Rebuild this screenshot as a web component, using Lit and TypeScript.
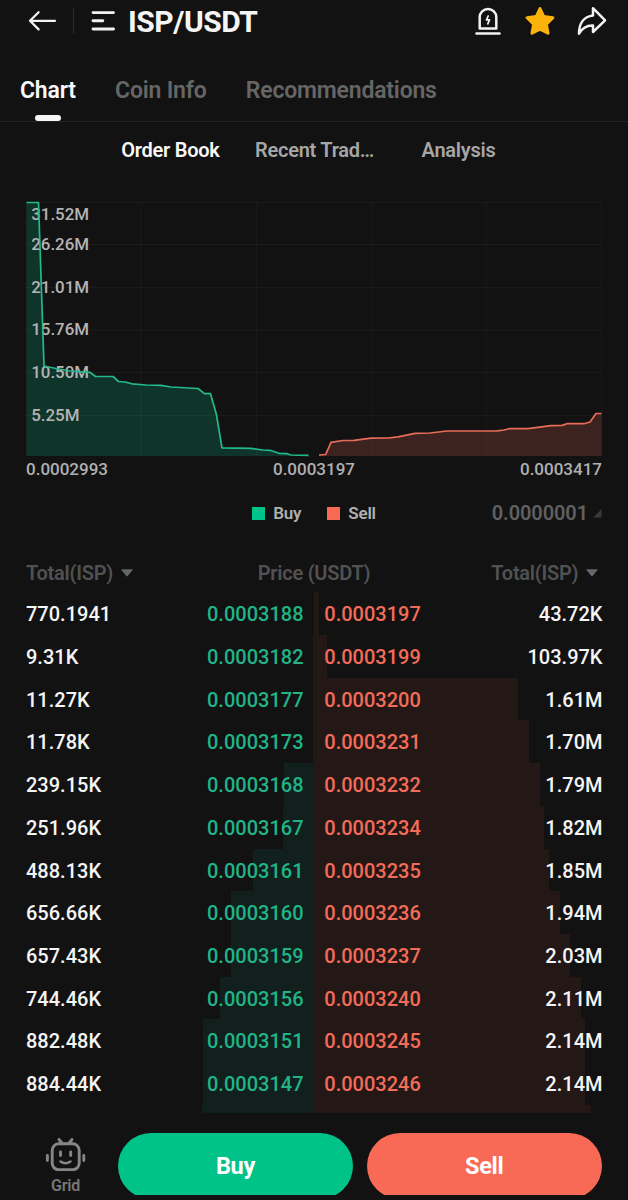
import { LitElement, html, svg, css } from "lit";
import { customElement } from "lit/decorators.js";

/** total, bid price, ask price, total, bid depth width, ask depth width */
type Row = [string, string, string, string, number, number];

const ROWS: Row[] = [
  ["770.1941", "0.0003188", "0.0003197", "43.72K", 0, 5],
  ["9.31K", "0.0003182", "0.0003199", "103.97K", 1, 12.7],
  ["11.27K", "0.0003177", "0.0003200", "1.61M", 1.5, 204],
  ["11.78K", "0.0003173", "0.0003231", "1.70M", 1.5, 214.7],
  ["239.15K", "0.0003168", "0.0003232", "1.79M", 29.8, 226.2],
  ["251.96K", "0.0003167", "0.0003234", "1.82M", 31.5, 229.7],
  ["488.13K", "0.0003161", "0.0003235", "1.85M", 61.5, 234.5],
  ["656.66K", "0.0003160", "0.0003236", "1.94M", 83, 245.5],
  ["657.43K", "0.0003159", "0.0003237", "2.03M", 83, 256],
  ["744.46K", "0.0003156", "0.0003240", "2.11M", 94, 267],
  ["882.48K", "0.0003151", "0.0003245", "2.14M", 111.3, 271],
  ["884.44K", "0.0003147", "0.0003246", "2.14M", 111.5, 271.2],
  ["", "", "", "", 112.3, 277],
];

const GRID_X = [0.5, 115, 230.5, 345.5, 460.5, 575.5];
const GRID_Y = [2.5, 44.5, 87.5, 130, 172.7, 215.5];
const LEVELS: [string, number][] = [
  ["31.52M", 20.2],
  ["26.26M", 50.2],
  ["21.01M", 92.7],
  ["15.76M", 135.4],
  ["10.50M", 178.2],
  ["5.25M", 221],
];

const BIDS =
  "0.5,2.5 12.5,2.5 18,166 30,168.5 44,171 64,172.3 69.5,176.5 87,176.5 92.5,181.5 99,182 106,183.8 120,185 135,185.3 145,187 172,188.5 178.5,193.7 184.5,193.7 190.3,214 196,247.8 225,248.4 237,250 244,250.3 253,253.3 261,253.7 265,255 282.5,255.3";
const ASKS =
  "293,255 299.7,254.5 305,242.3 317,240.5 328,240.3 345,238.2 362,238 372,236.8 389,233.3 404,233 421,231 471,230.8 478,230 483,228.7 502,228.7 525,225.6 536,225.4 541,223.7 558,223.7 564,222 570,213.5 575.5,213.5";

@customElement("app-root")
export class AppRoot extends LitElement {
  static styles = css`
    :host {
      display: flex;
      flex-direction: column;
      height: 1200px;
      overflow: hidden;
      background: #121212;
      color: #f5f5f5;
      font-family: Roboto, "Noto Sans", sans-serif;
      font-weight: 500;
      white-space: nowrap;
    }
    svg {
      display: block;
      flex: none;
    }
    .top {
      display: flex;
      align-items: center;
      height: 42px;
      padding: 0 20px 0 28px;
    }
    .sep {
      width: 1px;
      height: 26px;
      margin: 0 16px 0 15.5px;
      background: #2b2b2b;
    }
    .pair {
      flex: 1;
      margin: 2px 0 0 12.5px;
      font-size: 30px;
      line-height: 40px;
      font-weight: 700;
      letter-spacing: -0.45px;
    }
    .actions {
      display: flex;
      gap: 22.5px;
    }
    .tabs {
      display: flex;
      gap: 39.3px;
      height: 79px;
      padding-left: 20px;
      border-bottom: 1px solid #222;
      font-size: 23px;
      font-weight: 600;
      letter-spacing: -0.2px;
      color: #666;
    }
    .tab {
      display: flex;
      flex-direction: column;
      align-items: center;
      line-height: 28px;
      padding-top: 35px;
    }
    .on {
      color: #f8f8f8;
    }
    .mark {
      width: 26px;
      height: 7px;
      margin-top: 10px;
      border-radius: 3.5px;
      background: #f5f5f5;
    }
    .subtabs {
      display: grid;
      grid-template-columns: 144px 144px 144px;
      justify-content: center;
      margin-top: 16px;
      padding-left: 1px;
      text-align: center;
      font-size: 20px;
      line-height: 24px;
      font-weight: 600;
      letter-spacing: -0.25px;
      color: #a6a6a6;
    }
    .chart {
      margin: 40px 26px 0;
    }
    .chart text {
      font-size: 16.9px;
      fill: #b4b4b4;
    }
    .axis {
      display: grid;
      grid-template-columns: 1fr 1fr 1fr;
      margin: 0 26px;
      font-size: 17px;
      line-height: 25px;
      color: #b0b0b0;
    }
    .mid {
      text-align: center;
    }
    .end {
      text-align: right;
    }
    .legend {
      display: grid;
      grid-template-columns: 1fr auto 1fr;
      align-items: center;
      margin: 19px 26px 0;
      height: 24px;
      font-size: 17px;
      font-weight: 600;
      letter-spacing: -0.2px;
      color: #b0b0b0;
    }
    .keys {
      grid-column: 2;
      display: flex;
      gap: 26px;
    }
    .key {
      display: flex;
      align-items: center;
      gap: 8px;
    }
    .dot {
      width: 13px;
      height: 13px;
      background: #00c389;
    }
    .dot.ask {
      background: #f86a54;
    }
    .step {
      display: flex;
      justify-content: flex-end;
      align-items: center;
      gap: 5px;
      font-size: 20px;
      letter-spacing: -0.1px;
      color: #606060;
    }
    .head {
      display: grid;
      grid-template-columns: 1fr 1fr 1fr;
      margin: 35px 26px 0;
      height: 26px;
      line-height: 26px;
      font-size: 20px;
      font-weight: 600;
      letter-spacing: -0.25px;
      color: #515151;
    }
    .sort {
      display: flex;
      align-items: center;
      gap: 8px;
    }
    .sort.right {
      justify-content: flex-end;
      padding-right: 3.7px;
    }
    .book {
      height: 520.5px;
      margin-top: 6.3px;
      overflow: hidden;
      flex: none;
    }
    .row {
      display: grid;
      grid-template-columns: 314px 314px;
      height: 42.73px;
      line-height: 45.2px;
      font-size: 20px;
    }
    .side {
      display: grid;
      grid-template-rows: 42.73px;
    }
    .side > * {
      grid-area: 1 / 1;
    }
    .bar {
      background: #11201c;
      justify-self: end;
    }
    .bar.ask {
      background: #241817;
      justify-self: start;
    }
    .cells {
      display: flex;
      justify-content: space-between;
      padding: 0 10.5px 0 26px;
    }
    .cells.ask {
      padding: 0 25.5px 0 10.3px;
    }
    .bid-price {
      color: #20b488;
    }
    .ask-price {
      color: #f36c58;
    }
    .foot {
      display: flex;
      height: 62.3px;
      flex: none;
      margin-top: 20.2px;
      padding: 0 26px 0 44px;
      overflow: hidden;
    }
    .bot {
      width: 43px;
      margin-right: 30.7px;
      padding-top: 4px;
      text-align: center;
      font-size: 16px;
      line-height: 20px;
      font-weight: 600;
      letter-spacing: -0.2px;
      color: #787878;
    }
    .bot svg {
      margin-bottom: 5px;
    }
    .btn {
      flex: 1;
      height: 66px;
      border-radius: 33px;
      background: #00c38a;
      color: #fff;
      font-size: 23.5px;
      font-weight: 700;
      line-height: 67px;
      letter-spacing: -0.3px;
      text-align: center;
    }
    .btn.sell {
      margin-left: 13.3px;
      background: #f86a55;
    }
  `;

  private caret() {
    return html`<svg width="12" height="8" viewBox="0 0 12 8">
      <path d="M1 .3h10q.8.2.3 1L6.7 7q-.7.8-1.4 0L.7 1.3Q.2.5 1 .3z" fill="#666" />
    </svg>`;
  }

  private chart() {
    return html`<svg class="chart" width="576" height="255" viewBox="0 0 576 255" overflow="visible">
      <g transform="translate(0 -2)">
        <polygon points="${BIDS} 282.5,256 0.5,256" fill="#0f342a" />
        <polygon points="293,256 ${ASKS} 575.5,256" fill="#3d231f" />
        ${GRID_X.map((x) => svg`<path d="M${x} 2.5V256" stroke="#fff" stroke-opacity=".03" />`)}
        ${GRID_Y.map((y) => svg`<path d="M0 ${y}H576" stroke="#fff" stroke-opacity=".04" />`)}
        ${LEVELS.map(([t, y]) => svg`<text x="5.2" y=${y}>${t}</text>`)}
        <polyline points=${BIDS} fill="none" stroke="#22b98b" stroke-width="1.7" stroke-linejoin="round" />
        <polyline points=${ASKS} fill="none" stroke="#e96c59" stroke-width="1.7" stroke-linejoin="round" />
      </g>
    </svg>`;
  }

  render() {
    return html`
      <div class="top">
        <svg width="29" height="24" viewBox="28 9 29 24" fill="none" stroke="#f2f2f2" stroke-width="2.3" stroke-linecap="round" stroke-linejoin="round">
          <path d="M55 20.8H30M38.6 12.2L30 20.8l8.6 8.6" />
        </svg>
        <div class="sep"></div>
        <svg width="26" height="24" viewBox="90 9 26 24" fill="none" stroke="#f2f2f2" stroke-width="2.9" stroke-linecap="round">
          <path d="M93 12.6h20.5M93 20.8h9.8M93 29h20.5" />
        </svg>
        <div class="pair">ISP/USDT</div>
        <div class="actions">
          <svg width="28" height="30" viewBox="473.5 5.5 28 30" fill="none" stroke="#f2f2f2" stroke-width="2.5" stroke-linecap="round" stroke-linejoin="round">
            <path d="M479.2 28V16.7a8.3 8.3 0 0 1 16.6 0V28z" />
            <path d="M476 33h23" />
            <path d="M487.7 15.5L486 19.4h3l-1.7 3.9" stroke-width="1.7" />
          </svg>
          <svg width="30" height="30" viewBox="524.5 5.8 30 30">
            <path d="M539.5 8.4l3.8 8 9.1 1.2-6.5 6.5 1.6 8.9-8-4.1-8 4.1 1.6-8.9-6.5-6.5 9.1-1.2z" fill="#fbb20a" stroke="#fbb20a" stroke-width="3" stroke-linejoin="round" />
          </svg>
          <svg width="31" height="30" viewBox="577.5 5 31 30" fill="none" stroke="#f2f2f2" stroke-width="2.5" stroke-linecap="round" stroke-linejoin="round">
            <path d="M593.5 7.2L605.6 19.3 593.5 31v-6.5c-6.5-.3-10.5 2-14 8.200 0-10.5 5-17.2 14-18.2z" />
          </svg>
        </div>
      </div>
      <div class="tabs">
        <div class="tab on">Chart<div class="mark"></div></div>
        <div class="tab">Coin Info</div>
        <div class="tab">Recommendations</div>
      </div>
      <div class="subtabs">
        <div class="on">Order Book</div>
        <div>Recent Trad…</div>
        <div>Analysis</div>
      </div>
      ${this.chart()}
      <div class="axis">
        <div>0.0002993</div>
        <div class="mid">0.0003197</div>
        <div class="end">0.0003417</div>
      </div>
      <div class="legend">
        <div class="keys">
          <div class="key"><div class="dot"></div>Buy</div>
          <div class="key"><div class="dot ask"></div>Sell</div>
        </div>
        <div class="step">
          0.0000001
          <svg width="9" height="9" viewBox="0 0 9 9"><path d="M8.5 0v7.5q0 1-1 1H.5z" fill="#3a3a3a" /></svg>
        </div>
      </div>
      <div class="head">
        <div class="sort">Total(ISP)${this.caret()}</div>
        <div class="mid">Price (USDT)</div>
        <div class="sort right">Total(ISP)${this.caret()}</div>
      </div>
      <div class="book">
        ${ROWS.map(
          ([bidTotal, bid, ask, askTotal, bidW, askW]) => html`<div class="row">
            <div class="side">
              <div class="bar" style="width:${bidW}px"></div>
              <div class="cells"><span>${bidTotal}</span><span class="bid-price">${bid}</span></div>
            </div>
            <div class="side">
              <div class="bar ask" style="width:${askW}px"></div>
              <div class="cells ask"><span class="ask-price">${ask}</span><span>${askTotal}</span></div>
            </div>
          </div>`
        )}
      </div>
      <div class="foot">
        <div class="bot">
          <svg width="43" height="34" viewBox="44 1137 43 34" fill="none" stroke="#868686" stroke-width="2.9" stroke-linecap="round" stroke-linejoin="round">
            <rect x="52.2" y="1143.8" width="27" height="26" rx="6.5" />
            <path d="M59 1139.5l2.8 3.5M72 1139.5l-2.8 3.5M47.4 1155.5v5M83.8 1155.5v5M60.5 1152v3.5M70.7 1152v3.5" />
            <path d="M60.5 1161.5q5 3.4 10 0" stroke-width="2.5" />
          </svg>
          Grid
        </div>
        <div class="btn">Buy</div>
        <div class="btn sell">Sell</div>
      </div>
    `;
  }
}
